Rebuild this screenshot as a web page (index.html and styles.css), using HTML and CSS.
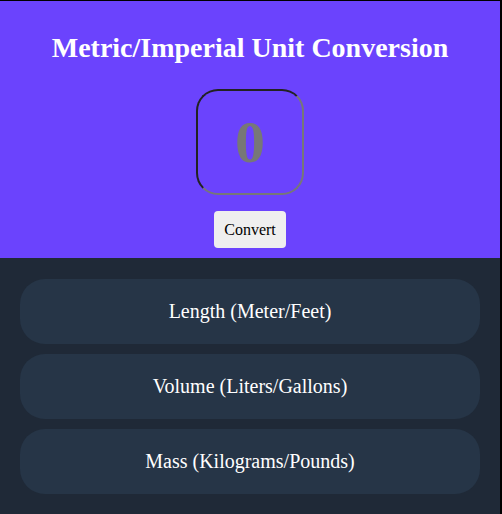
FILE: index.html
```html
<!DOCTYPE html>
<html>
<head>
<meta charset="utf-8">
<link rel="stylesheet" href="styles.css">
</head>
<body>
<div class="app">
  <header class="hero">
    <h1 class="title">Metric/Imperial Unit Conversion</h1>
    <div class="display">0</div>
    <button class="convert">Convert</button>
  </header>
  <main class="list">
    <div class="card">Length (Meter/Feet)</div>
    <div class="card">Volume (Liters/Gallons)</div>
    <div class="card">Mass (Kilograms/Pounds)</div>
  </main>
</div>
</body>
</html>
```
FILE: styles.css
```css
html, body {
  margin: 0;
  padding: 0;
  background: #000;
}
body {
  font-family: "Liberation Serif", "Times New Roman", serif;
  padding-top: 1px;
}
.app {
  width: 500px;
  height: 513px;
  background: #1f2937;
}
.hero {
  background: #6b43fd;
  height: 257px;
  display: flex;
  flex-direction: column;
  align-items: center;
  box-sizing: border-box;
  padding-top: 31px;
}
.title {
  margin: 0;
  color: #fff;
  font-size: 28px;
  line-height: 32px;
  font-weight: bold;
}
.display {
  margin-top: 25px;
  width: 104px;
  height: 102px;
  border: 2px solid;
  border-color: #222 #777 #777 #222;
  border-radius: 22px;
  display: flex;
  align-items: center;
  justify-content: center;
  color: #777;
  font-size: 60px;
  font-weight: bold;
}
.convert {
  margin-top: 16px;
  font-family: "Liberation Serif", "Times New Roman", serif;
  font-size: 16px;
  color: #000;
  background: #efefef;
  border: none;
  border-radius: 4px;
  padding: 0 10px;
  height: 37px;
}
.list {
  display: flex;
  flex-direction: column;
  gap: 10px;
  padding: 21px 20px 20px;
}
.card {
  height: 65px;
  border-radius: 25px;
  background: #263547;
  color: #fff;
  font-size: 20px;
  display: flex;
  align-items: center;
  justify-content: center;
}
```
